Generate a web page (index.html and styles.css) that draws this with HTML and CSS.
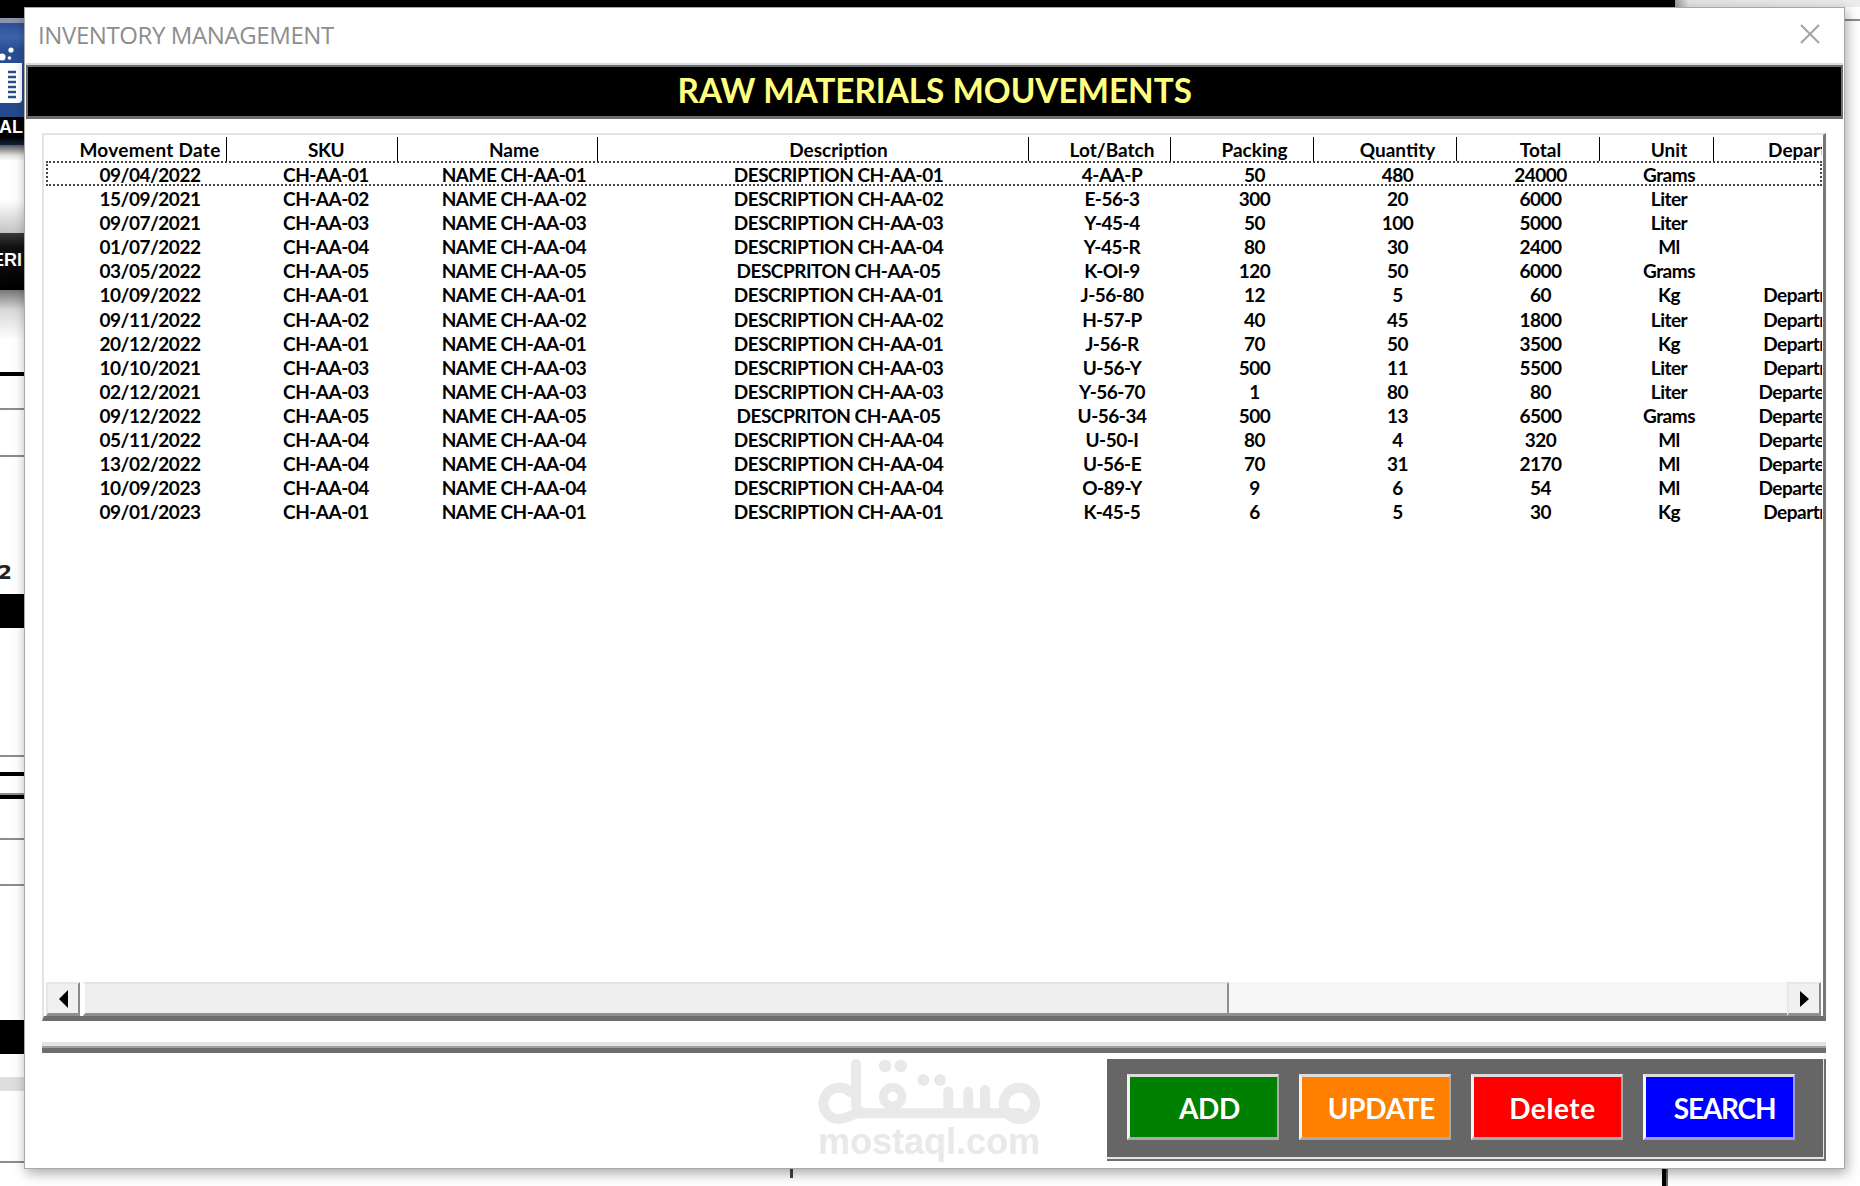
FILE: index.html
```html
<!DOCTYPE html>
<html lang="en">
<head>
<meta charset="utf-8">
<title>Inventory Management</title>
<link rel="stylesheet" href="styles.css">
</head>
<body>
<div class="desktop">
  <div class="strip">
    <div class="s-black"></div>
    <div class="s-steel"></div>
    <div class="s-blue">
      <svg class="s-icon" width="24" height="94" viewBox="0 0 24 94">
        <circle cx="2" cy="34" r="3.5" fill="#fff"/>
        <circle cx="11" cy="27" r="2.6" fill="#fff"/>
        <circle cx="9.5" cy="35" r="1.8" fill="#fff"/>
        <path d="M-4 40H22V76Q22 80 18 80H-4Z" fill="#fff"/>
        <path d="M8 49H16M8 54H16M8 59H16M8 64H16M8 69H16M8 74H16" stroke="#2b4c8c" stroke-width="2.4"/>
      </svg>
    </div>
    <div class="s-label s-label-top"><span>IAL</span></div>
    <div class="s-sheen"></div>
    <div class="s-label s-label-mid"><span>ERI</span></div>
    <div class="s-fade"></div>
    <div></div><div class="s-black"></div>
    <div></div><div class="s-rule"></div>
    <div></div><div class="s-rule"></div>
    <div class="s-num">2</div><div class="s-black"></div>
    <div></div><div class="s-rule"></div>
    <div></div><div class="s-black"></div>
    <div></div><div class="s-rule"></div>
    <div></div><div class="s-black"></div>
    <div></div><div class="s-rule"></div>
    <div></div><div class="s-rule"></div>
    <div></div><div class="s-black"></div>
    <div></div><div class="s-pale"></div>
    <div></div><div class="s-rule"></div>
  </div>
  <div class="rest">
    <div class="rest-top">
      <div class="rest-top-black"></div>
      <div class="rest-top-light"></div>
    </div>
    <div class="rest-rule"></div>
    <div class="rest-ticks">
      <div class="tick-small"></div>
      <div class="tick-large"></div>
    </div>
  </div>
</div>

<main class="dialog">
  <header class="titlebar">
    <span class="titlebar-text">INVENTORY MANAGEMENT</span>
    <svg class="close" width="20" height="20" viewBox="0 0 20 20">
      <path d="M1 1L19 19M19 1L1 19" stroke="#a3a3a3" stroke-width="2" fill="none"/>
    </svg>
  </header>
  <h1 class="banner"><span class="banner-text">RAW MATERIALS MOUVEMENTS</span></h1>
  <div class="content">
    <section class="listbox">
      <div class="table-wrap">
        <table class="grid">
          <thead>
            <tr><th>Movement Date</th><th>SKU</th><th>Name</th><th>Description</th><th>Lot/Batch</th><th>Packing</th><th>Quantity</th><th>Total</th><th>Unit</th><th>Department</th></tr>
          </thead>
          <tbody>
            <tr><td>09/04/2022</td><td>CH-AA-01</td><td>NAME CH-AA-01</td><td>DESCRIPTION CH-AA-01</td><td>4-AA-P</td><td>50</td><td>480</td><td>24000</td><td>Grams</td><td></td></tr>
            <tr><td>15/09/2021</td><td>CH-AA-02</td><td>NAME CH-AA-02</td><td>DESCRIPTION CH-AA-02</td><td>E-56-3</td><td>300</td><td>20</td><td>6000</td><td>Liter</td><td></td></tr>
            <tr><td>09/07/2021</td><td>CH-AA-03</td><td>NAME CH-AA-03</td><td>DESCRIPTION CH-AA-03</td><td>Y-45-4</td><td>50</td><td>100</td><td>5000</td><td>Liter</td><td></td></tr>
            <tr><td>01/07/2022</td><td>CH-AA-04</td><td>NAME CH-AA-04</td><td>DESCRIPTION CH-AA-04</td><td>Y-45-R</td><td>80</td><td>30</td><td>2400</td><td>Ml</td><td></td></tr>
            <tr><td>03/05/2022</td><td>CH-AA-05</td><td>NAME CH-AA-05</td><td>DESCPRITON CH-AA-05</td><td>K-OI-9</td><td>120</td><td>50</td><td>6000</td><td>Grams</td><td></td></tr>
            <tr><td>10/09/2022</td><td>CH-AA-01</td><td>NAME CH-AA-01</td><td>DESCRIPTION CH-AA-01</td><td>J-56-80</td><td>12</td><td>5</td><td>60</td><td>Kg</td><td>Department 1</td></tr>
            <tr><td>09/11/2022</td><td>CH-AA-02</td><td>NAME CH-AA-02</td><td>DESCRIPTION CH-AA-02</td><td>H-57-P</td><td>40</td><td>45</td><td>1800</td><td>Liter</td><td>Department 1</td></tr>
            <tr><td>20/12/2022</td><td>CH-AA-01</td><td>NAME CH-AA-01</td><td>DESCRIPTION CH-AA-01</td><td>J-56-R</td><td>70</td><td>50</td><td>3500</td><td>Kg</td><td>Department 1</td></tr>
            <tr><td>10/10/2021</td><td>CH-AA-03</td><td>NAME CH-AA-03</td><td>DESCRIPTION CH-AA-03</td><td>U-56-Y</td><td>500</td><td>11</td><td>5500</td><td>Liter</td><td>Department 1</td></tr>
            <tr><td>02/12/2021</td><td>CH-AA-03</td><td>NAME CH-AA-03</td><td>DESCRIPTION CH-AA-03</td><td>Y-56-70</td><td>1</td><td>80</td><td>80</td><td>Liter</td><td>Departement 2</td></tr>
            <tr><td>09/12/2022</td><td>CH-AA-05</td><td>NAME CH-AA-05</td><td>DESCPRITON CH-AA-05</td><td>U-56-34</td><td>500</td><td>13</td><td>6500</td><td>Grams</td><td>Departement 2</td></tr>
            <tr><td>05/11/2022</td><td>CH-AA-04</td><td>NAME CH-AA-04</td><td>DESCRIPTION CH-AA-04</td><td>U-50-I</td><td>80</td><td>4</td><td>320</td><td>Ml</td><td>Departement 2</td></tr>
            <tr><td>13/02/2022</td><td>CH-AA-04</td><td>NAME CH-AA-04</td><td>DESCRIPTION CH-AA-04</td><td>U-56-E</td><td>70</td><td>31</td><td>2170</td><td>Ml</td><td>Departement 2</td></tr>
            <tr><td>10/09/2023</td><td>CH-AA-04</td><td>NAME CH-AA-04</td><td>DESCRIPTION CH-AA-04</td><td>O-89-Y</td><td>9</td><td>6</td><td>54</td><td>Ml</td><td>Departement 2</td></tr>
            <tr><td>09/01/2023</td><td>CH-AA-01</td><td>NAME CH-AA-01</td><td>DESCRIPTION CH-AA-01</td><td>K-45-5</td><td>6</td><td>5</td><td>30</td><td>Kg</td><td>Department 1</td></tr>
          </tbody>
        </table>
        <div class="focus-rect"></div>
      </div>
      <div class="scrollbar">
        <div class="sb-btn"><span class="arrow-left"></span></div>
        <div class="sb-thumb"></div>
        <div class="sb-track"></div>
        <div class="sb-btn"><span class="arrow-right"></span></div>
      </div>
    </section>
    <div class="separator"></div>
    <div class="footer">
      <div class="panel">
        <button class="btn btn-add">ADD</button>
        <button class="btn btn-update">UPDATE</button>
        <button class="btn btn-delete">Delete</button>
        <button class="btn btn-search">SEARCH</button>
      </div>
    </div>
  </div>
  <div class="watermark">
    <svg class="wm-logo" width="300" height="94" viewBox="0 0 900 282">
      <g fill="none" stroke="#e9e9e9" stroke-width="30" stroke-linecap="round">
        <path d="M211 157A47 47 0 1 0 178 237C205 237 215 220 240 220H720"/>
        <path d="M228 72V190Q228 220 258 220"/>
        <circle cx="338" cy="170" r="28" stroke-width="26"/>
        <path d="M505 155V220M565 155V220M615 150V220"/>
        <circle cx="718" cy="190" r="47"/>
      </g>
      <g fill="#e9e9e9">
        <circle cx="315" cy="78" r="19"/>
        <circle cx="362" cy="78" r="19"/>
        <circle cx="430" cy="120" r="18"/>
        <circle cx="480" cy="120" r="18"/>
      </g>
    </svg>
    <div class="wm-text">mostaql.com</div>
  </div>
</main>
</body>
</html>
```

FILE: styles.css
```css
* { box-sizing: border-box; }

html, body {
  margin: 0;
  padding: 0;
  width: 1860px;
  height: 1186px;
  overflow: hidden;
  background: #fff;
}

body {
  position: relative;
  font-family: "Lato", "Liberation Sans", sans-serif;
}

/* Window lying behind the dialog */
.desktop {
  display: flex;
  width: 1860px;
  height: 1186px;
}

.strip {
  width: 24px;
  flex: none;
  display: grid;
  grid-template-rows:
    18px 5px 94px 28px 88px 57px 50px
    32px 4px 32px 2px 45px 2px 137px 34px
    127px 2px 15px 4px 17px 2px 0 4px 39px 2px 44px 2px
    134px 34px 23px 14px 70px 2px;
  overflow: hidden;
}

.s-black { background: #000; }
.s-rule { background: #8c8c8c; }
.s-pale { background: #dedede; }
.s-steel { background: #8b94a8; }

.s-blue {
  background: linear-gradient(#2a4f96 0, #3d64ab 14px, #2a4f96 26px, #25488c 100%);
  overflow: hidden;
}

.s-icon { display: block; }

.s-label {
  display: flex;
  color: #fff;
  font: 700 18px/20px "Liberation Sans", sans-serif;
  white-space: nowrap;
  overflow: hidden;
}

.s-label-top {
  justify-content: flex-end;
  background: linear-gradient(#000 0, #000 20px, #14213f 100%);
  padding-right: 1px;
}

.s-label-mid {
  background: linear-gradient(#3a3a3a 0, #111 14px, #000 100%);
  padding-top: 17px;
}

.s-label-mid span { margin-left: -8px; }

.s-sheen {
  background: linear-gradient(#555 0, #ddd 10px, #fff 16px, #fff 55px, #c4c4c4 100%);
}

.s-fade { background: linear-gradient(#777 0, #d8d8d8 20px, #fff 100%); }

.s-num {
  display: flex;
  align-items: flex-end;
  padding-bottom: 12px;
  margin-left: -2px;
  color: #222;
  font: 700 20px/20px "DejaVu Sans", sans-serif;
}

.rest {
  flex: 1;
  display: flex;
  flex-direction: column;
}

.rest-top {
  display: flex;
  height: 7px;
}

.rest-top-black {
  width: 1651px;
  background: #000;
}

.rest-top-light {
  flex: 1;
  background: linear-gradient(90deg, #999 0, #e4e4e4 14px, #ececec 100%);
}

.rest-rule {
  margin: 12px 0 0 1820px;
  height: 2px;
  background: #8c8c8c;
}

.rest-ticks {
  margin-top: auto;
  height: 19px;
  display: flex;
  align-items: flex-start;
}

.tick-small {
  margin-left: 766px;
  width: 3px;
  height: 11px;
  background: #444;
}

.tick-large {
  margin-left: 869px;
  width: 6px;
  height: 19px;
  background: #000;
  border-right: 2px solid #666;
}

/* Dialog */
.dialog {
  position: absolute;
  left: 24px;
  top: 7px;
  width: 1821px;
  height: 1162px;
  background: #fff;
  border: 1px solid #a8a8a8;
  box-shadow: 2px 4px 12px rgba(0, 0, 0, .35);
  display: flex;
  flex-direction: column;
}

.titlebar {
  height: 57px;
  flex: none;
  display: flex;
  align-items: center;
  justify-content: space-between;
  padding: 0 24px 3px 13px;
}

.titlebar-text {
  font: 400 24px/30px "Open Sans", sans-serif;
  color: #8d8d8d;
  letter-spacing: -.4px;
}

.close { display: block; margin-top: -2px; }

.banner {
  margin: 0 1px;
  height: 54px;
  flex: none;
  background: #000;
  border: 2px solid #6e6e6e;
  border-bottom-width: 3px;
  box-shadow: 0 -2px 0 #dcdcdc;
  color: #ffff80;
  font: 700 35px/44px "Lato", sans-serif;
  text-align: center;
}

.banner-text {
  display: inline-block;
  transform: scaleX(.95);
}

.content {
  flex: 1;
  min-height: 0;
  padding: 14px 18px 0 17px;
  display: flex;
  flex-direction: column;
}

/* List box */
.listbox {
  height: 888px;
  flex: none;
  display: flex;
  flex-direction: column;
  padding: 0 0 0 2px;
  border-top: 2px solid #e3e3e3;
  border-left: 2px solid #e3e3e3;
  border-right: 3px solid #777;
  border-bottom: 5px solid #6e6e6e;
}

.table-wrap {
  position: relative;
  flex: 1;
  min-height: 0;
  margin-right: 1px;
  overflow: hidden;
}

.grid {
  table-layout: fixed;
  width: 1852px;
  border-collapse: collapse;
  font-size: 19px;
  font-weight: 700;
  color: #000;
}

.grid th, .grid td {
  padding: 0 0 0 27px;
  text-align: center;
  white-space: nowrap;
  overflow: hidden;
}

.grid th {
  height: 26px;
  line-height: 23px;
  padding-top: 3px;
  font-weight: 700;
  background: linear-gradient(#000, #000) right bottom / 1px 24px no-repeat;
}

.grid th:last-child { background: none; }

.grid td {
  height: 24.08px;
  line-height: 20px;
  padding-top: 4px;
  letter-spacing: -.5px;
}

.grid th:nth-child(1), .grid td:nth-child(1) { width: 181px; }
.grid th:nth-child(1) { letter-spacing: .3px; }
.grid th:nth-child(2), .grid td:nth-child(2) { width: 171px; }
.grid th:nth-child(2) { letter-spacing: -.5px; }
.grid th:nth-child(3), .grid td:nth-child(3) { width: 200px; padding-left: 32px; }
.grid th:nth-child(4), .grid td:nth-child(4) { width: 431px; padding-left: 50px; }
.grid th:nth-child(5), .grid td:nth-child(5) { width: 142px; padding-left: 24px; }
.grid th:nth-child(6), .grid td:nth-child(6) { width: 143px; padding-left: 24px; }
.grid th:nth-child(7), .grid td:nth-child(7) { width: 143px; padding-left: 24px; }
.grid th:nth-child(8), .grid td:nth-child(8) { width: 143px; padding-left: 24px; }
.grid th:nth-child(9), .grid td:nth-child(9) { width: 114px; padding-left: 24px; }
.grid th:nth-child(10), .grid td:nth-child(10) { width: 184px; }

.focus-rect {
  position: absolute;
  left: 0;
  right: 0;
  top: 26px;
  height: 25px;
  border: 2px dotted #444;
}

/* Scrollbar */
.scrollbar {
  height: 34px;
  flex: none;
  display: flex;
  margin-right: 2px;
}

.sb-btn {
  width: 34px;
  flex: none;
  display: flex;
  align-items: center;
  justify-content: center;
  background: #f0f0f0;
  border-top: 2px solid #e6e6e6;
  border-left: 2px solid #e6e6e6;
  border-right: 2px solid #8a8a8a;
  border-bottom: 3px solid #8f8f8f;
}

.arrow-left {
  width: 0;
  height: 0;
  border-top: 9px solid transparent;
  border-bottom: 9px solid transparent;
  border-right: 9px solid #000;
}

.arrow-right {
  width: 0;
  height: 0;
  border-top: 8px solid transparent;
  border-bottom: 8px solid transparent;
  border-left: 9px solid #000;
}

.sb-thumb {
  width: 1146px;
  flex: none;
  margin-left: 3px;
  background: #efefef;
  border-top: 2px solid #e3e3e3;
  border-left: 2px solid #fff;
  border-right: 2px solid #8f8f8f;
  border-bottom: 3px solid #8f8f8f;
}

.sb-track {
  flex: 1;
  background: repeating-conic-gradient(#f1f1f1 0 25%, #fbfbfb 0 50%) 0 0 / 2px 2px;
  border-bottom: 3px solid #8f8f8f;
}

/* Separator */
.separator {
  margin-top: 21px;
  height: 11px;
  flex: none;
  background: linear-gradient(#e4e4e4 0, #e4e4e4 4px, #a0a0a0 4px, #a0a0a0 6px, #6e6e6e 6px, #6e6e6e 100%);
}

/* Footer */
.footer {
  display: flex;
  justify-content: flex-end;
  margin-top: 6px;
}

.panel {
  width: 719px;
  height: 102px;
  display: flex;
  gap: 20px;
  padding: 15px 0 0 20px;
  background: #666;
  border-bottom: 2px solid #6e6e6e;
  border-right: 2px solid #6e6e6e;
  box-shadow: inset -1px -2px 0 #e4e4e4;
}

.btn {
  width: 152px;
  height: 66px;
  padding: 2px 0 0 12px;
  border-style: solid;
  border-width: 3px 2px 3px 3px;
  border-color: #dcdcdc #aaa #aaa #f4f4f4;
  color: #fff;
  font: 700 28px/34px "Lato", sans-serif;
  letter-spacing: -.3px;
}

.btn-add { background: #008000; }
.btn-update { background: #ff8000; }
.btn-delete { background: #ff0000; letter-spacing: .6px; padding-left: 10px; }
.btn-search { background: #0000ff; border-bottom-color: #9c9ce6; border-right-color: #9c9ce6; letter-spacing: -1.2px; padding-left: 10px; }

/* Watermark */
.watermark {
  position: absolute;
  left: 755px;
  top: 1032px;
  width: 300px;
  pointer-events: none;
}

.wm-logo { display: block; }

.wm-text {
  margin: -9px 0 0 38px;
  color: #e9e9e9;
  font: 700 36px/34px "Liberation Sans", sans-serif;
  white-space: nowrap;
}
```
